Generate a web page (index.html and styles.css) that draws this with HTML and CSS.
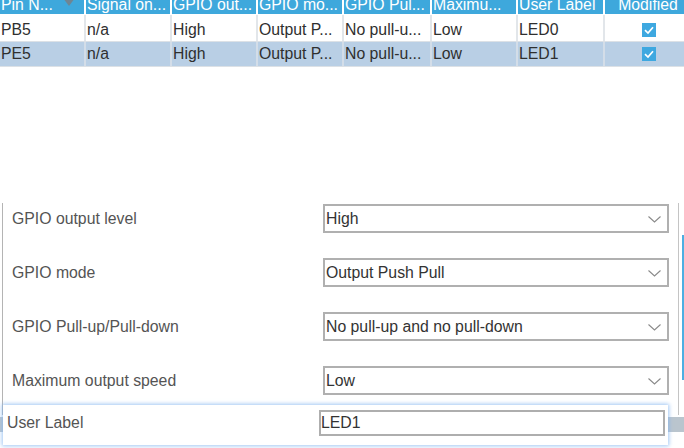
FILE: index.html
```html
<!DOCTYPE html>
<html lang="en">
<head>
    <meta charset="UTF-8">
    <meta name="viewport" content="width=device-width, initial-scale=1.0">
    <title>GPIO Configuration</title>
    <link rel="stylesheet" href="styles.css">
</head>
<body>

    <div class="pin-table">
        <div class="row head">
            <div class="cell sortable">Pin N...
                <svg class="sort" width="10" height="16" viewBox="0 0 10 16"><polygon points="0.5,10 9.5,10 5,16" fill="#6f8593"/></svg>
            </div>
            <div class="cell">Signal on...</div>
            <div class="cell">GPIO out...</div>
            <div class="cell">GPIO mo...</div>
            <div class="cell">GPIO Pul...</div>
            <div class="cell">Maximu...</div>
            <div class="cell">User Label</div>
            <div class="cell center">Modified</div>
        </div>
        <div class="row body first">
            <div class="cell">PB5</div>
            <div class="cell">n/a</div>
            <div class="cell">High</div>
            <div class="cell">Output P...</div>
            <div class="cell">No pull-u...</div>
            <div class="cell">Low</div>
            <div class="cell">LED0</div>
            <div class="cell center"><span class="check"><svg width="14" height="14" viewBox="0 0 14 14"><polyline points="3,7.2 6,10 11,4.2" fill="none" stroke="#fff" stroke-width="1.7"/></svg></span></div>
        </div>
        <div class="row body selected">
            <div class="cell">PE5</div>
            <div class="cell">n/a</div>
            <div class="cell">High</div>
            <div class="cell">Output P...</div>
            <div class="cell">No pull-u...</div>
            <div class="cell">Low</div>
            <div class="cell">LED1</div>
            <div class="cell center"><span class="check"><svg width="14" height="14" viewBox="0 0 14 14"><polyline points="3,7.2 6,10 11,4.2" fill="none" stroke="#fff" stroke-width="1.7"/></svg></span></div>
        </div>
    </div>

    <div class="panel">
        <div class="props">
            <div class="prop">
                <span class="prop-label">GPIO output level</span>
                <div class="combo"><span>High</span><svg class="chevron" width="13" height="7" viewBox="0 0 13 7"><polyline points="0.5,0.5 6.5,6 12.5,0.5" fill="none" stroke="#8a8a8a" stroke-width="1.1"/></svg></div>
            </div>
            <div class="prop">
                <span class="prop-label">GPIO mode</span>
                <div class="combo"><span>Output Push Pull</span><svg class="chevron" width="13" height="7" viewBox="0 0 13 7"><polyline points="0.5,0.5 6.5,6 12.5,0.5" fill="none" stroke="#8a8a8a" stroke-width="1.1"/></svg></div>
            </div>
            <div class="prop">
                <span class="prop-label">GPIO Pull-up/Pull-down</span>
                <div class="combo"><span>No pull-up and no pull-down</span><svg class="chevron" width="13" height="7" viewBox="0 0 13 7"><polyline points="0.5,0.5 6.5,6 12.5,0.5" fill="none" stroke="#8a8a8a" stroke-width="1.1"/></svg></div>
            </div>
            <div class="prop">
                <span class="prop-label">Maximum output speed</span>
                <div class="combo"><span>Low</span><svg class="chevron" width="13" height="7" viewBox="0 0 13 7"><polyline points="0.5,0.5 6.5,6 12.5,0.5" fill="none" stroke="#8a8a8a" stroke-width="1.1"/></svg></div>
            </div>
        </div>
        <div class="vscroll"><div class="thumb"></div></div>
    </div>

    <div class="footer">
        <div class="hscroll"></div>
        <!-- focused row floats over the scrollbar -->
        <div class="focus-row">
            <span class="prop-label">User Label</span>
            <div class="text-field">LED1</div>
        </div>
    </div>

</body>
</html>
```

FILE: styles.css
```css
body {
    margin: 0;
    width: 684px;
    height: 448px;
    overflow: hidden;
    background: #ffffff;
    font-family: "Liberation Sans", Arial, sans-serif;
    font-size: 15.8px;
    color: #2f2f2f;
}

/* Pin table */
.pin-table {
    width: 691px;
}

.row {
    display: grid;
    grid-template-columns: 84px 84px 84px 84px 86px 84px 85px 86px;
    column-gap: 2px;
}

.cell {
    white-space: nowrap;
    overflow: hidden;
    padding-left: 1px;
}

.cell.center {
    text-align: center;
    padding-left: 0;
}

.head {
    margin-top: -10px;
    margin-bottom: 1px;
    height: 24px;
    background: #ffffff;
}

.head .cell {
    background: #3ea8dc;
    color: #ffffff;
    line-height: 30px;
}

.sortable {
    display: flex;
    justify-content: space-between;
    padding-right: 10px;
}

.sort {
    flex: none;
}

.body {
    background: #e2e6ea;
}

.body .cell {
    background: #ffffff;
}

.body.first {
    height: 26px;
}

.body.first .cell {
    padding-top: 3px;
    line-height: 23px;
}

.body.selected {
    height: 24px;
    border-top: 1px solid #dce1e6;
    border-bottom: 1px solid #dce1e6;
    background: #d3dde8;
}

.body.selected .cell {
    background: #b9cfe5;
    line-height: 24px;
}

.check {
    display: inline-block;
    width: 14px;
    height: 14px;
    margin-left: 1px;
    background: #3ea8e0;
    vertical-align: -2px;
}

.check svg {
    display: block;
}

/* Property panel */
.panel {
    display: flex;
    margin-top: 136px;
    height: 212px;
}

.props {
    margin-left: 2px;
    border-left: 1px solid #b4b4b4;
    padding: 1px 9px 0 9px;
    display: flex;
    flex-direction: column;
    gap: 25px;
}

.prop {
    display: flex;
    align-items: center;
    height: 29px;
}

.prop-label {
    width: 311px;
    color: #545454;
}

.combo {
    box-sizing: border-box;
    width: 346px;
    height: 29px;
    border: 2px solid #b0b0b0;
    padding: 0 6px 0 1px;
    display: flex;
    align-items: center;
    justify-content: space-between;
    color: #333333;
}

.chevron {
    flex: none;
    margin-top: 1px;
}

.vscroll {
    width: 5px;
    border-left: 1px solid #c4c4c4;
}

.thumb {
    margin: 32px 0 0 3px;
    width: 3px;
    height: 145px;
    background: #4cafe2;
}

/* Bottom strip with floating row */
.footer {
    position: relative;
    margin-top: 2px;
}

.hscroll {
    height: 15px;
    background: #bac5ce;
}

.focus-row {
    position: absolute;
    top: -12px;
    left: 3px;
    box-sizing: border-box;
    width: 665px;
    height: 40px;
    padding: 5px 0 0 4px;
    display: flex;
    align-items: flex-start;
    background: #ffffff;
    box-shadow: 0 0 4px 1px rgba(130, 180, 240, 0.75);
}

.focus-row .prop-label {
    width: 312px;
    line-height: 26px;
}

.text-field {
    box-sizing: border-box;
    width: 346px;
    height: 26px;
    border: 2px solid #aeaeae;
    line-height: 22px;
    color: #333333;
}
```
